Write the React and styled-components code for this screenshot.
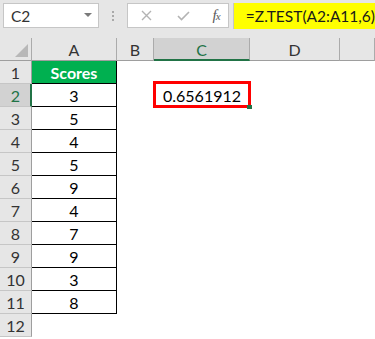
import React from "react";
import styled, { createGlobalStyle } from "styled-components";

const Global = createGlobalStyle`
  html, body { margin: 0; padding: 0; background: #fff; }
  body { font-family: Lato, "Liberation Sans", sans-serif; }
`;

const Page = styled.div`
  width: 375px;
  height: 339px;
  overflow: hidden;
  background: #fff;
`;

const TopBar = styled.div`
  height: 38px;
  background: #e6e6e6;
  display: flex;
  align-items: flex-start;
  padding-top: 3px;
  box-sizing: border-box;
`;

const NameBox = styled.div`
  margin-left: 3px;
  width: 102px;
  height: 25px;
  box-sizing: border-box;
  background: #fff;
  border: 1px solid #c6c6c6;
  display: flex;
  align-items: center;
  justify-content: space-between;
  padding: 0 6px 0 7px;
  font-size: 15.5px;
  color: #333;
`;

const Caret = styled.span`
  width: 0;
  height: 0;
  border-left: 4px solid transparent;
  border-right: 4px solid transparent;
  border-top: 4px solid #7a7a7a;
  margin-top: -2px;
`;

const Dots = styled.div`
  width: 30px;
  height: 25px;
  display: flex;
  flex-direction: column;
  align-items: center;
  justify-content: center;
  gap: 2px;
  & > span {
    width: 2px;
    height: 2px;
    background: #a9a9a9;
  }
`;

const IconBox = styled.div`
  width: 109px;
  height: 25px;
  box-sizing: border-box;
  background: #fff;
  border: 1px solid #c6c6c6;
  display: flex;
  align-items: center;
  padding-left: 13px;
`;

const IconSlot = styled.span`
  display: flex;
  align-items: center;
  margin-right: ${(p) => p.$gap}px;
`;

const Fx = styled.span`
  font-family: "Liberation Serif", serif;
  font-style: italic;
  font-size: 15px;
  color: #595959;
  letter-spacing: -1px;
  & > small { font-size: 11px; }
`;

const FormulaBox = styled.div`
  margin-left: 4px;
  flex: 1;
  height: 26px;
  box-sizing: border-box;
  background: #ffff00;
  border-left: 1px solid #c6c6c6;
  display: flex;
  align-items: center;
  padding-left: 12px;
  font-size: 15.5px;
  color: #1a1a1a;
  white-space: nowrap;
`;

const Sheet = styled.div`
  display: grid;
  grid-template-columns: 32px 85px 37px 96px 90px 1fr;
  grid-template-rows: 23px;
  grid-auto-rows: 23px;
`;

const Corner = styled.div`
  background: #e6e6e6;
  border-right: 1px solid #ababab;
  border-bottom: 1px solid #9e9e9e;
  box-sizing: border-box;
  position: relative;
  & > svg { position: absolute; right: 3px; bottom: 3px; }
`;

const ColHead = styled.div`
  box-sizing: border-box;
  background: ${(p) => (p.$active ? "#d2d2d2" : "#e6e6e6")};
  border-right: 1px solid #ababab;
  border-bottom: ${(p) => (p.$active ? "2px solid #217346" : "1px solid #9e9e9e")};
  color: ${(p) => (p.$active ? "#217346" : "#333")};
  font-size: 16px;
  display: flex;
  align-items: center;
  justify-content: center;
  padding-top: 1px;
`;

const RowHead = styled.div`
  box-sizing: border-box;
  background: ${(p) => (p.$active ? "#d2d2d2" : "#e6e6e6")};
  border-right: ${(p) => (p.$active ? "2px solid #217346" : "1px solid #9e9e9e")};
  border-bottom: 1px solid #c6c6c6;
  color: ${(p) => (p.$active ? "#217346" : "#333")};
  font-size: 16px;
  display: flex;
  align-items: center;
  justify-content: center;
  padding-left: ${(p) => (p.$active ? "1px" : "0")};
`;

const DataCell = styled.div`
  box-sizing: border-box;
  border-right: 1px solid #000;
  border-bottom: 1px solid #000;
  background: ${(p) => (p.$head ? "#00b050" : "#fff")};
  color: ${(p) => (p.$head ? "#fff" : "#000")};
  font-weight: ${(p) => (p.$head ? 700 : 400)};
  font-size: 16px;
  display: flex;
  align-items: center;
  justify-content: center;
`;

const Cell = styled.div`
  position: relative;
  display: flex;
  align-items: center;
  justify-content: center;
  font-size: 16px;
  color: #000;
`;

const Highlight = styled.div`
  position: absolute;
  top: -3px;
  left: -1px;
  right: -1px;
  bottom: -1px;
  border: 3px solid #ff0000;
  box-sizing: border-box;
  pointer-events: none;
`;

const Handle = styled.div`
  position: absolute;
  right: -2px;
  bottom: -2px;
  width: 5px;
  height: 4px;
  background: #217346;
  z-index: 2;
`;

const scores = [3, 5, 4, 5, 9, 4, 7, 9, 3, 8];
const cols = ["A", "B", "C", "D", ""];

function Row({ n }) {
  const isHead = n === 1;
  const isData = n >= 2 && n <= 11;
  return (
    <>
      <RowHead $active={n === 2}>{n}</RowHead>
      {isHead ? (
        <DataCell $head>Scores</DataCell>
      ) : isData ? (
        <DataCell>{scores[n - 2]}</DataCell>
      ) : (
        <Cell />
      )}
      <Cell />
      {n === 2 ? (
        <Cell>
          0.6561912
          <Highlight />
          <Handle />
        </Cell>
      ) : (
        <Cell />
      )}
      <Cell />
      <Cell />
    </>
  );
}

export default function App() {
  return (
    <Page>
      <Global />
      <TopBar>
        <NameBox>
          <span>C2</span>
          <Caret />
        </NameBox>
        <Dots>
          <span />
          <span />
          <span />
        </Dots>
        <IconBox>
          <IconSlot $gap={25}>
            <svg width="11" height="11" viewBox="0 0 11 11">
              <path d="M1 1L10 10M10 1L1 10" stroke="#b3b3b3" strokeWidth="1.4" fill="none" />
            </svg>
          </IconSlot>
          <IconSlot $gap={23}>
            <svg width="13" height="10" viewBox="0 0 13 10">
              <path d="M1 5L4.5 8.5L12 1" stroke="#b3b3b3" strokeWidth="1.6" fill="none" />
            </svg>
          </IconSlot>
          <Fx>
            f<small>x</small>
          </Fx>
        </IconBox>
        <FormulaBox>=Z.TEST(A2:A11,6)</FormulaBox>
      </TopBar>
      <Sheet>
        <Corner>
          <svg width="13" height="13" viewBox="0 0 13 13">
            <path d="M13 0L13 13L0 13Z" fill="#b8b8b8" />
          </svg>
        </Corner>
        {cols.map((c) => (
          <ColHead key={c || "E"} $active={c === "C"}>
            {c}
          </ColHead>
        ))}
        {Array.from({ length: 12 }, (_, i) => (
          <Row key={i} n={i + 1} />
        ))}
      </Sheet>
    </Page>
  );
}
